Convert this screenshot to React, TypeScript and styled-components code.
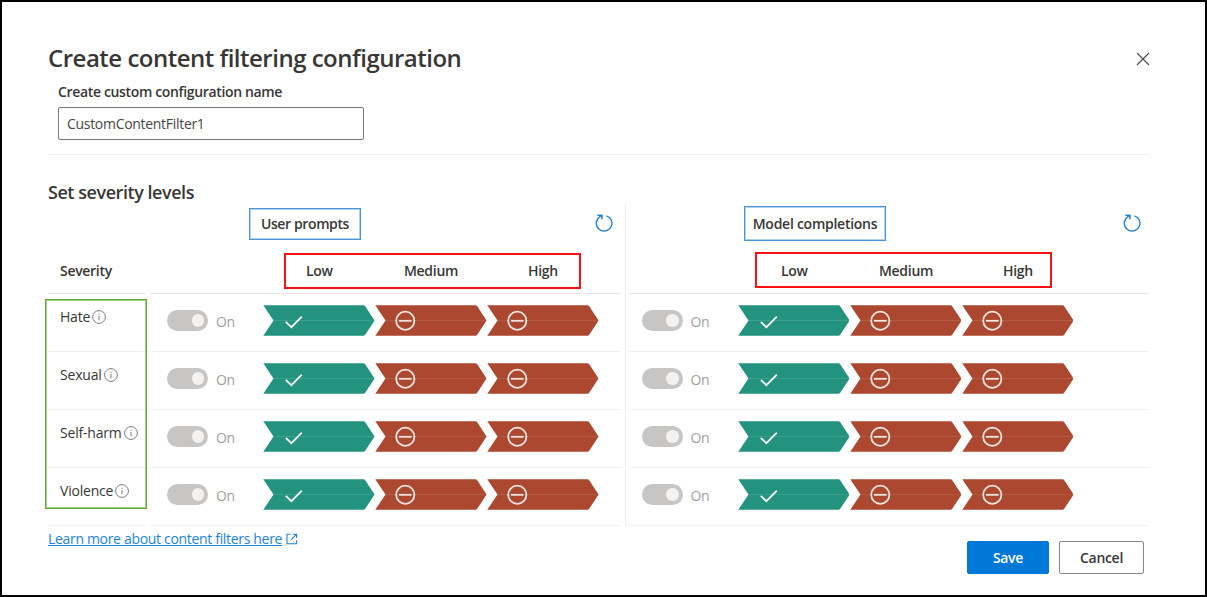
import React from "react";
import styled, { createGlobalStyle } from "styled-components";

const GlobalStyle = createGlobalStyle`
  * { box-sizing: border-box; }
  body {
    margin: 0;
    background: #fff;
    color: #383736;
    font-family: "Segoe UI", "Open Sans", "Noto Sans", sans-serif;
    font-size: 14px;
    line-height: 20px;
  }
`;

const Dialog = styled.main`
  display: flex;
  flex-direction: column;
  width: 1207px;
  height: 597px;
  padding: 38px 56px 0 46px;
  border: 2px solid #000;
  background: #fff;
  overflow: hidden;
`;

const Header = styled.header`
  display: flex;
  justify-content: space-between;
  align-items: center;
  height: 36px;
`;

const Title = styled.h1`
  margin: 0;
  font-size: 24px;
  font-weight: 600;
  line-height: 36px;
  letter-spacing: -0.5px;
  white-space: nowrap;
`;

const CloseButton = styled.button`
  display: flex;
  margin: 2px -1px 0 0;
  padding: 0;
  border: 0;
  background: none;
`;

const NameField = styled.label`
  display: flex;
  flex-direction: column;
  align-items: flex-start;
  gap: 5px;
  height: 79px;
  padding: 6px 0 0 10px;
  border-bottom: 1px solid #f0efee;
`;

const FieldLabel = styled.span`
  font-weight: 600;
  letter-spacing: -0.35px;
  white-space: nowrap;
`;

const NameInput = styled.input`
  width: 306px;
  height: 33px;
  padding: 0 8px;
  border: 1px solid #7a7978;
  border-radius: 2px;
  color: #484644;
  font: inherit;
  letter-spacing: -0.3px;
  outline: none;
`;

const SectionTitle = styled.h2`
  height: 48px;
  margin: 0;
  padding-top: 24px;
  font-size: 18px;
  font-weight: 600;
  line-height: 26px;
  letter-spacing: -0.45px;
  white-space: nowrap;
`;

const Levels = styled.section`
  position: relative;
  display: flex;
  height: 323px;
`;

const SeverityColumn = styled.div`
  width: 97px;
  margin-right: 4px;
`;

const ColumnHeading = styled.div`
  height: 91px;
  padding: 58px 0 0 12px;
  border-bottom: 1px solid #eaeaea;
  font-weight: 600;
  letter-spacing: -0.3px;
`;

const SeverityRow = styled.div`
  display: flex;
  align-items: flex-start;
  gap: 2px;
  height: 58px;
  padding: 13px 0 0 12px;
  border-bottom: 1px solid #f3f2f1;
  letter-spacing: -0.2px;
  white-space: nowrap;

  svg { margin-top: 3px; }
`;

const Panel = styled.div<{ $width: number }>`
  width: ${(p) => p.$width}px;
`;

const PanelSeparator = styled.div`
  width: 1px;
  margin: 0 3px 0 4px;
  background: #efefef;
`;

const PanelHeader = styled.div<{ $raise: number }>`
  display: flex;
  flex-direction: column;
  height: 91px;
  padding-top: ${(p) => 5 - p.$raise}px;
  border-bottom: 1px solid #eaeaea;
`;

const PanelTop = styled.div<{ $start: number; $end: number; $height: number }>`
  display: flex;
  justify-content: space-between;
  align-items: flex-start;
  height: ${(p) => p.$height}px;
  padding: 0 ${(p) => p.$end}px 0 ${(p) => p.$start}px;
`;

const PanelName = styled.h3<{ $width: number; $height: number; $tracking: number }>`
  display: flex;
  align-items: center;
  justify-content: center;
  width: ${(p) => p.$width}px;
  height: ${(p) => p.$height}px;
  margin: 0;
  border: 1px solid #4a94d8;
  box-shadow: inset 0 0 0 1px #b0d1ee;
  font-size: 14px;
  font-weight: 600;
  letter-spacing: ${(p) => p.$tracking}px;
  white-space: nowrap;
`;

const ResetButton = styled.button<{ $top: number }>`
  display: flex;
  margin-top: ${(p) => p.$top}px;
  padding: 0;
  border: 0;
  background: none;
`;

const LevelNames = styled.div<{ $start: number; $inset: number; $drop: number }>`
  display: flex;
  align-items: center;
  width: 297px;
  height: 36px;
  margin-left: ${(p) => p.$start}px;
  padding: ${(p) => p.$drop}px 0 0 ${(p) => p.$inset}px;
  border: 2px solid #fa1010;
  font-weight: 600;
  letter-spacing: -0.3px;
`;

const LevelName = styled.span<{ $width: number }>`
  flex: none;
  width: ${(p) => p.$width}px;
  text-align: left;
`;

const FilterRow = styled.div<{ $start: number }>`
  display: flex;
  align-items: center;
  height: 58px;
  padding: 0 0 4px ${(p) => p.$start}px;
  border-bottom: 1px solid #f3f2f1;
`;

const Toggle = styled.span`
  display: flex;
  align-items: center;
  justify-content: flex-end;
  width: 41px;
  height: 21px;
  padding-right: 4px;
  border-radius: 11px;
  background: #c8c6c4;
`;

const Thumb = styled.span`
  width: 12.5px;
  height: 12.5px;
  border-radius: 50%;
  background: #f3f2f1;
`;

const ToggleText = styled.span`
  width: 55px;
  padding: 2px 0 0 8px;
  color: #a19f9d;
  letter-spacing: -0.5px;
`;

const Chevrons = styled.div`
  display: flex;
  gap: 0.5px;
`;

const Footer = styled.footer`
  display: flex;
  justify-content: space-between;
  align-items: flex-start;
  padding: 3px 5px 0 0;
`;

const LearnMore = styled.a`
  display: flex;
  align-items: center;
  gap: 4px;
  color: #1c83d8;
  letter-spacing: -0.32px;
  white-space: nowrap;

  span {
    text-decoration: underline;
    text-underline-offset: 1px;
  }
`;

const Actions = styled.div`
  display: flex;
  gap: 10px;
  padding-top: 12px;
`;

const Button = styled.button<{ $primary?: boolean }>`
  width: ${(p) => (p.$primary ? 82 : 85)}px;
  height: 33px;
  padding: 0;
  border: 1px solid ${(p) => (p.$primary ? "#0078d7" : "#8a8886")};
  border-radius: 2px;
  background: ${(p) => (p.$primary ? "#0078d7" : "#fff")};
  color: ${(p) => (p.$primary ? "#fff" : "#383736")};
  font: inherit;
  font-weight: 600;
  letter-spacing: -0.3px;
`;

const CategoryOutline = styled.div`
  position: absolute;
  top: 96px;
  left: -3px;
  width: 102px;
  height: 210px;
  border: 1px solid #62a73b;
  box-shadow: inset 0 0 0 1px #a5cd8d;
  pointer-events: none;
`;

const InfoIcon = () => (
  <svg width="14" height="14" viewBox="0 0 14 14" fill="none" stroke="#7d7b79">
    <circle cx="7" cy="7" r="6.4" />
    <path d="M7 6v4.3M7 3.7v1.2" />
  </svg>
);

const ResetIcon = () => (
  <svg width="18" height="18" viewBox="0 0 18 18" fill="none" stroke="#2b84d0" strokeWidth="1.4">
    <path d="M11.4 1.8A7.8 7.8 0 1 1 4.2 3.2L6 1.6" />
    <path d="M2.4 1.2h4.6v4.4" />
    <path d="M3.6 1.2H7v3.4Z" fill="#2b84d0" stroke="none" />
  </svg>
);

const CloseIcon = () => (
  <svg width="14" height="14" viewBox="0 0 14 14" stroke="#4a4846" strokeWidth="1.1">
    <path d="M1 1l12 12M13 1L1 13" />
  </svg>
);

const ExternalIcon = () => (
  <svg width="12" height="12" viewBox="0 0 12 12" fill="none" stroke="#1c83d8" strokeWidth="1.1">
    <path d="M4.5 1.2H1v9.6h9.6V7.3M6.8 1.2h3.8V5M10.4 1.4L5 6.8" />
  </svg>
);

const Chevron = ({ allowed }: { allowed?: boolean }) => (
  <svg width="111.5" height="31" viewBox="0 0 111.5 31">
    <path
      d="M.3 .3H100.5Q101.6 .3 102.2 1.2L111.6 15.5L102.2 29.8Q101.6 30.7 100.5 30.7H.3L10.5 15.5Z"
      fill={allowed ? "#23937f" : "#ab482f"}
    />
    <path d="M11 15.5H111" stroke="#fff" strokeOpacity="0.1" />
    {allowed ? (
      <path d="M22.8 16.8L28.4 22.2L38.8 11.6" fill="none" stroke="#f6faf9" strokeWidth="1.8" />
    ) : (
      <g fill="none" stroke="#f6e6e2" strokeWidth="1.8">
        <circle cx="30.3" cy="15.8" r="9.1" />
        <path d="M24 15.8h12.6" />
      </g>
    )}
  </svg>
);

const categories = ["Hate", "Sexual", "Self-harm", "Violence"];

const FilterRows = ({ start }: { start: number }) => (
  <>
    {categories.map((name) => (
      <FilterRow key={name} $start={start}>
        <Toggle role="switch" aria-checked="true" aria-label={name}>
          <Thumb />
        </Toggle>
        <ToggleText>On</ToggleText>
        <Chevrons>
          <Chevron allowed />
          <Chevron />
          <Chevron />
        </Chevrons>
      </FilterRow>
    ))}
  </>
);

const LevelLabels = () => (
  <>
    <LevelName $width={98}>Low</LevelName>
    <LevelName $width={124}>Medium</LevelName>
    <LevelName $width={36}>High</LevelName>
  </>
);

export default function App() {
  return (
    <>
      <GlobalStyle />
      <Dialog>
        <Header>
          <Title>Create content filtering configuration</Title>
          <CloseButton aria-label="Close">
            <CloseIcon />
          </CloseButton>
        </Header>
        <NameField>
          <FieldLabel>Create custom configuration name</FieldLabel>
          <NameInput defaultValue="CustomContentFilter1" />
        </NameField>
        <SectionTitle>Set severity levels</SectionTitle>
        <Levels>
          <SeverityColumn>
            <ColumnHeading>Severity</ColumnHeading>
            {categories.map((name) => (
              <SeverityRow key={name}>
                <span>{name}</span>
                <InfoIcon />
              </SeverityRow>
            ))}
          </SeverityColumn>
          <Panel $width={472}>
            <PanelHeader $raise={0}>
              <PanelTop $start={100} $end={8} $height={45}>
                <PanelName $width={112} $height={32} $tracking={-0.38}>User prompts</PanelName>
                <ResetButton $top={6} aria-label="Reset user prompts">
                  <ResetIcon />
                </ResetButton>
              </PanelTop>
              <LevelNames $start={135} $inset={20} $drop={0}>
                <LevelLabels />
              </LevelNames>
            </PanelHeader>
            <FilterRows start={18} />
          </Panel>
          <PanelSeparator />
          <Panel $width={520}>
            <PanelHeader $raise={2}>
              <PanelTop $start={115} $end={8.5} $height={46}>
                <PanelName $width={142} $height={35} $tracking={-0.26}>Model completions</PanelName>
                <ResetButton $top={8} aria-label="Reset model completions">
                  <ResetIcon />
                </ResetButton>
              </PanelTop>
              <LevelNames $start={126} $inset={24} $drop={2}>
                <LevelLabels />
              </LevelNames>
            </PanelHeader>
            <FilterRows start={12.5} />
          </Panel>
          <CategoryOutline />
        </Levels>
        <Footer>
          <LearnMore>
            <span>Learn more about content filters here</span>
            <ExternalIcon />
          </LearnMore>
          <Actions>
            <Button $primary>Save</Button>
            <Button>Cancel</Button>
          </Actions>
        </Footer>
      </Dialog>
    </>
  );
}
